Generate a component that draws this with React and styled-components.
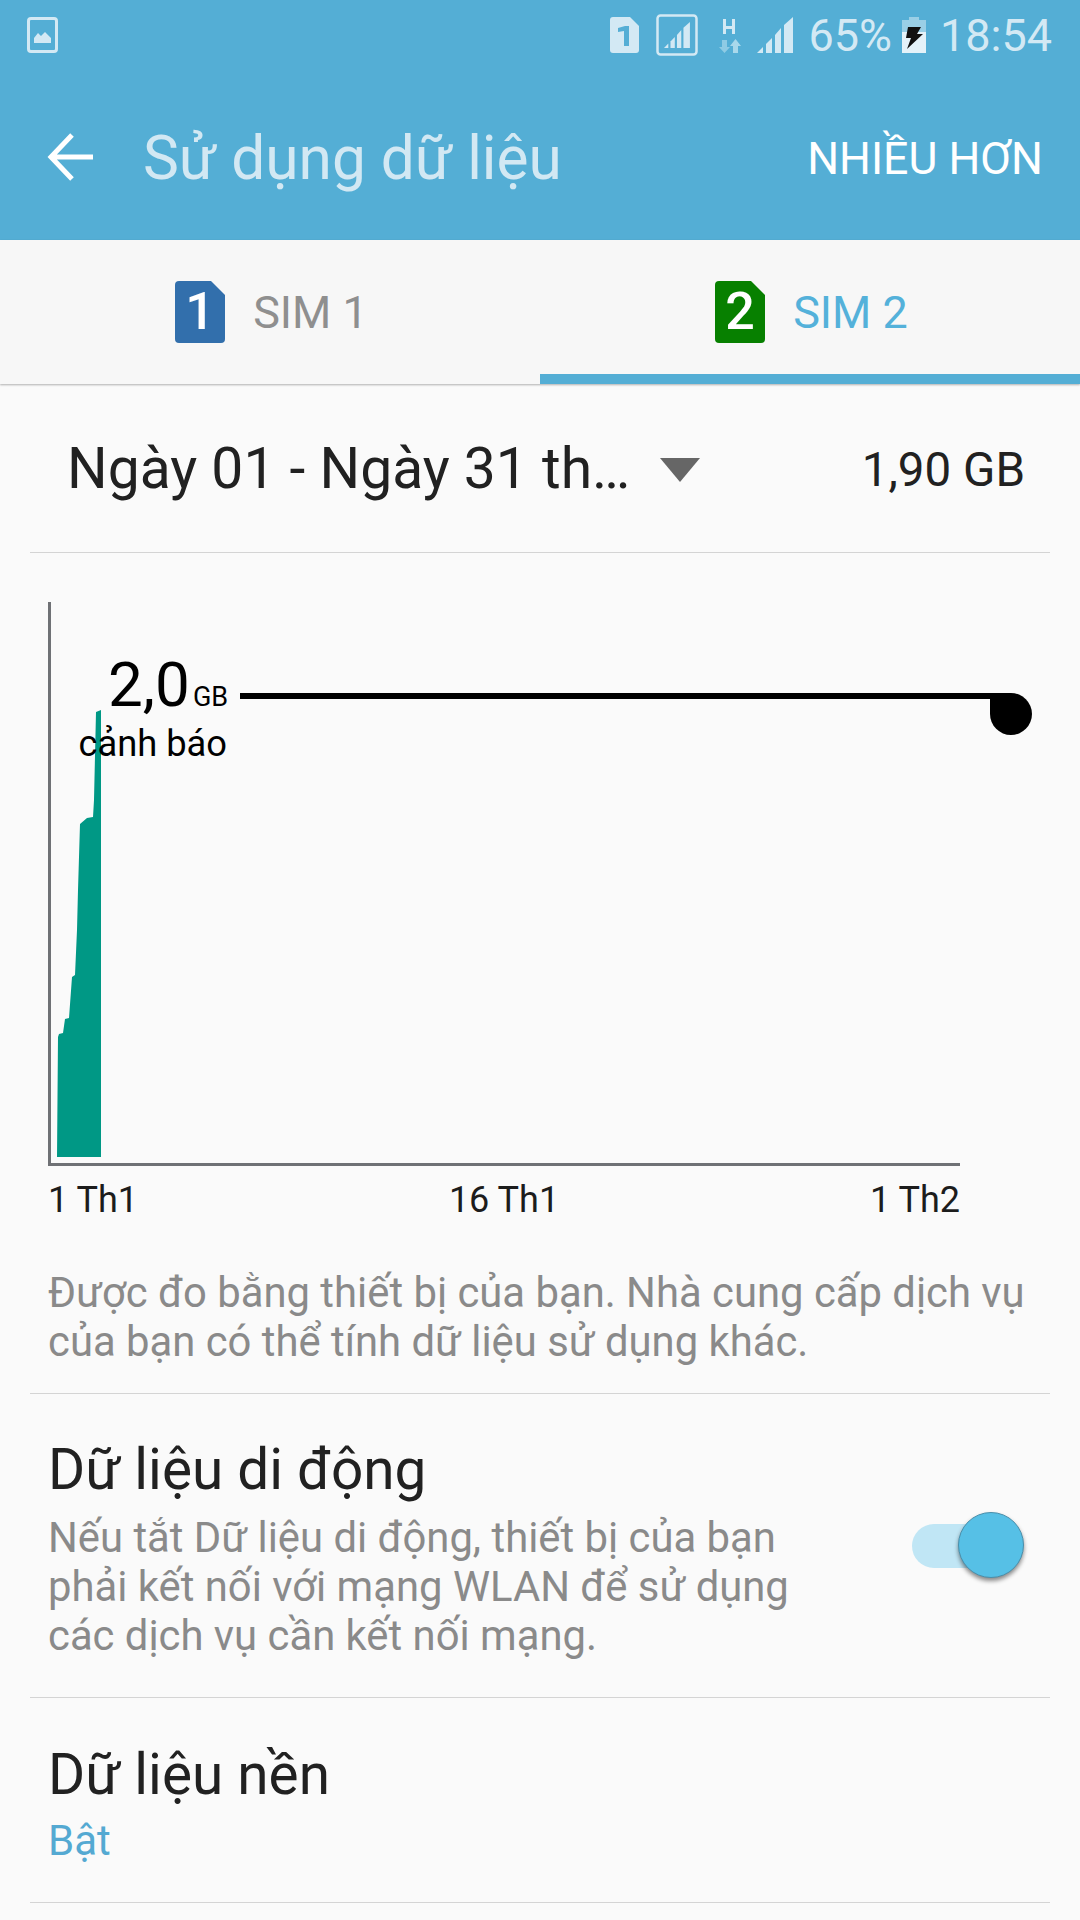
import styled, { createGlobalStyle } from 'styled-components';

const GlobalStyle = createGlobalStyle`
    html, body {
        margin: 0;
        padding: 0;
        background: #fafafa;
        font-family: Roboto, "Noto Sans", sans-serif;
    }
`;

const Page = styled.div`
    width: 1080px;
    height: 1920px;
    overflow: hidden;
    background: #fafafa;
`;

const Header = styled.header`
    background: #54aed5;
    height: 240px;
`;

const StatusBar = styled.div`
    height: 70px;
    display: flex;
    align-items: center;
    justify-content: space-between;
    padding: 0 28px 0 27px;
    color: #d3e9f4;
`;

const StatusRight = styled.div`
    display: flex;
    align-items: center;
`;

const StatusText = styled.span`
    font-size: 45px;
    line-height: 70px;
    padding-top: 2px;
    margin-left: ${p => p.$left}px;
`;

const StatusIcon = styled.svg`
    display: block;
    margin-left: ${p => p.$left || 0}px;
`;

const Toolbar = styled.div`
    height: 170px;
    box-sizing: border-box;
    display: flex;
    align-items: center;
    padding: 3px 37px 0 47px;
`;

const BackButton = styled.svg`
    display: block;
    width: 46px;
    height: 48px;
    flex: none;
`;

const Title = styled.h1`
    margin: 0 0 0 50px;
    padding-top: 3px;
    flex: 1;
    font-size: 60.4px;
    font-weight: 400;
    color: #d2e8f3;
    white-space: nowrap;
`;

const MoreButton = styled.span`
    padding-top: 5px;
    font-size: 44.7px;
    color: #fff;
    white-space: nowrap;
`;

const Tabs = styled.div`
    display: flex;
    height: 144px;
    background: #f7f7f7;
    box-shadow: 0 1px 2px rgba(0, 0, 0, 0.3);
`;

const Tab = styled.div`
    flex: 1;
    display: flex;
    align-items: center;
    justify-content: center;
    gap: 28px;
    padding-top: ${p => (p.$active ? 10 : 0)}px;
    padding-left: 3px;
    border-bottom: ${p => (p.$active ? '10px solid #54aed5' : '0')};
    box-sizing: border-box;
    font-size: 45px;
    color: ${p => (p.$active ? '#54b1da' : '#8f8f8f')};
`;

const SimBadge = styled.div`
    position: relative;
    width: 50px;
    height: 62px;
    display: flex;
    justify-content: center;
    font-size: 52px;
    font-weight: 500;
    line-height: 62px;
    color: #fff;
    flex: none;

    & svg {
        position: absolute;
        left: 0;
        top: 0;
    }

    & span {
        position: relative;
    }
`;

const DateRow = styled.div`
    height: 169px;
    margin: 0 30px;
    padding: 0 25px 0 37px;
    display: flex;
    align-items: center;
    border-bottom: 1px solid #d4d4d4;
    box-sizing: border-box;
`;

const DateText = styled.span`
    font-size: 57px;
    color: #212121;
    white-space: nowrap;
`;

const DateArrow = styled.span`
    width: 0;
    height: 0;
    margin: 4px 0 0 30px;
    border-left: 20px solid transparent;
    border-right: 20px solid transparent;
    border-top: 24px solid #666;
`;

const DateTotal = styled.span`
    margin-left: auto;
    padding-top: 3px;
    font-size: 47.5px;
    color: #212121;
`;

const ChartWrap = styled.div`
    padding: 49px 0 0 48px;
`;

const Chart = styled.div`
    position: relative;
    width: 912px;
    height: 564px;
    border-left: 3px solid #6f7175;
    border-bottom: 3px solid #6f7175;
    box-sizing: border-box;
`;

const ChartFill = styled.svg`
    position: absolute;
    left: 0;
    top: 0;
`;

const LimitValue = styled.div`
    position: absolute;
    left: 57px;
    top: 47px;
    font-size: 62px;
    line-height: 72px;
    color: #000;
    white-space: nowrap;
`;

const LimitUnit = styled.span`
    font-size: 27px;
    margin-left: 3px;
`;

const LimitLabel = styled.div`
    position: absolute;
    right: 733px;
    top: 120px;
    font-size: 36.3px;
    line-height: 44px;
    color: #000;
    white-space: nowrap;
`;

const LimitLine = styled.div`
    position: absolute;
    left: 189px;
    top: 91px;
    width: 770px;
    height: 6px;
    background: #000;
`;

const LimitKnob = styled.div`
    position: absolute;
    left: 939px;
    top: 91px;
    width: 42px;
    height: 42px;
    border-radius: 50%;
    border-top-left-radius: 0;
    background: #000;
`;

const AxisLabels = styled.div`
    width: 912px;
    display: flex;
    justify-content: space-between;
    padding-top: 12px;
    font-size: 36px;
    line-height: 44px;
    color: #1c1c1c;
`;

const Note = styled.p`
    margin: 46px 30px 0;
    padding: 0 18px 27px;
    border-bottom: 1px solid #d4d4d4;
    font-size: 41.8px;
    line-height: 49px;
    color: #8a8a8a;
    white-space: nowrap;
`;

const Row = styled.div`
    margin: 0 30px;
    padding: ${p => p.$pad};
    display: flex;
    align-items: center;
    border-bottom: 1px solid #d4d4d4;
`;

const RowBody = styled.div`
    flex: 1;
`;

const RowTitle = styled.div`
    font-size: 56.7px;
    line-height: 87px;
    color: #212121;
`;

const RowDescription = styled.div`
    font-size: 41.8px;
    line-height: 49px;
    color: #8a8a8a;
    white-space: nowrap;
`;

const RowValue = styled.div`
    font-size: 42px;
    line-height: 46px;
    color: #54a9d2;
`;

const Switch = styled.div`
    position: relative;
    width: 88px;
    height: 44px;
    margin: 6px 50px 0 0;
    border-radius: 22px;
    background: #c0e6f5;
    flex: none;
`;

const SwitchKnob = styled.div`
    position: absolute;
    right: -24px;
    top: -12px;
    width: 66px;
    height: 66px;
    box-sizing: border-box;
    border-radius: 50%;
    background: #56c0e6;
    border: 1px solid #4a8fab;
    box-shadow: 0 3px 4px rgba(0, 0, 0, 0.45);
`;

const SimIcon = ({ color, digit }) => (
    <SimBadge>
        <svg width="50" height="62" viewBox="0 0 50 62">
            <path d="M4 0H36L50 14V58a4 4 0 0 1-4 4H4a4 4 0 0 1-4-4V4a4 4 0 0 1 4-4Z" fill={color} />
        </svg>
        <span>{digit}</span>
    </SimBadge>
);

const SignalBars = ({ x = 0, y = 0, scale = 1, fill }) => (
    <g transform={`translate(${x} ${y}) scale(${scale})`} fill={fill}>
        <path d="M0 36L6 30V36Z" />
        <path d="M9 36V27L15 21V36Z" />
        <path d="M18 36V18L24 11V36Z" />
        <path d="M27 36V8L36 0V36Z" />
    </g>
);

export default function App() {
    return (
        <Page>
            <GlobalStyle />
            <Header>
                <StatusBar>
                    <StatusIcon width="31" height="36" viewBox="0 0 31 36">
                        <rect x="1.5" y="1.5" width="28" height="33" rx="2.5" fill="none" stroke="#d3e9f4" strokeWidth="3" />
                        <path d="M7 26V21L11 16L14 19L18 15L24 21V26Z" fill="#d3e9f4" />
                    </StatusIcon>
                    <StatusRight>
                        <StatusIcon width="29" height="36" viewBox="0 0 29 36">
                            <path d="M3 0H20L29 9V33a3 3 0 0 1-3 3H3a3 3 0 0 1-3-3V3a3 3 0 0 1 3-3Z" fill="#d3e9f4" />
                            <path d="M8 11L15 9H19V29H14V14L8 15Z" fill="#54aed5" />
                        </StatusIcon>
                        <StatusIcon $left={17} width="42" height="42" viewBox="0 0 42 42">
                            <rect x="1.5" y="1.5" width="39" height="39" rx="3" fill="none" stroke="#d3e9f4" strokeWidth="2.5" />
                            <SignalBars x={8} y={8} scale={0.72} fill="#d3e9f4" />
                        </StatusIcon>
                        <StatusIcon $left={21} width="22" height="36" viewBox="0 0 22 36">
                            <path d="M4 2H7V9H13V2H16V17H13V12H7V17H4Z" fill="#d3e9f4" />
                            <path d="M3 23H8V30H11L5.5 36L0 30H3Z" fill="#8fcbe4" />
                            <path d="M14 36V29H11L16.5 22L22 29H19V36Z" fill="#a9d8eb" />
                        </StatusIcon>
                        <StatusIcon $left={16} width="36" height="36" viewBox="0 0 36 36">
                            <SignalBars fill="#d3e9f4" />
                        </StatusIcon>
                        <StatusText $left={15}>65%</StatusText>
                        <StatusIcon $left={10} width="24" height="36" viewBox="0 0 24 36">
                            <path d="M7 0H17V3H24V36H0V3H7Z" fill="#e4f2f9" />
                            <path d="M7 0H17V3H24V15H0V3H7Z" fill="#9acfe6" />
                            <path d="M6 10H19L15 17H21L5 32L9 21H4Z" fill="#111" />
                        </StatusIcon>
                        <StatusText $left={14}>18:54</StatusText>
                    </StatusRight>
                </StatusBar>
                <Toolbar>
                    <BackButton viewBox="0 0 46 48">
                        <path d="M46 24H4M25 2L4 24L25 46" fill="none" stroke="#fff" strokeWidth="5" />
                    </BackButton>
                    <Title>Sử dụng dữ liệu</Title>
                    <MoreButton>NHIỀU HƠN</MoreButton>
                </Toolbar>
            </Header>

            <Tabs>
                <Tab>
                    <SimIcon color="#326fac" digit="1" />
                    SIM 1
                </Tab>
                <Tab $active>
                    <SimIcon color="#078000" digit="2" />
                    SIM 2
                </Tab>
            </Tabs>

            <DateRow>
                <DateText>Ngày 01 - Ngày 31 th…</DateText>
                <DateArrow />
                <DateTotal>1,90 GB</DateTotal>
            </DateRow>

            <ChartWrap>
                <Chart>
                    <ChartFill width="120" height="564" viewBox="51 602 120 564">
                        <path
                            d="M57 1157L58 1037L59 1034L63 1033L65 1019L69 1018L72 977L75 975L77 930L78 890L80 824L87 818L93 817L94 800L96 712L101 710V1157Z"
                            fill="#009885"
                        />
                    </ChartFill>
                    <LimitValue>2,0<LimitUnit>GB</LimitUnit></LimitValue>
                    <LimitLabel>cảnh báo</LimitLabel>
                    <LimitLine />
                    <LimitKnob />
                </Chart>
                <AxisLabels>
                    <span>1 Th1</span>
                    <span>16 Th1</span>
                    <span>1 Th2</span>
                </AxisLabels>
            </ChartWrap>

            <Note>
                Được đo bằng thiết bị của bạn. Nhà cung cấp dịch vụ
                <br />
                của bạn có thể tính dữ liệu sử dụng khác.
            </Note>

            <Row $pad="32px 0 37px 18px">
                <RowBody>
                    <RowTitle>Dữ liệu di động</RowTitle>
                    <RowDescription>
                        Nếu tắt Dữ liệu di động, thiết bị của bạn
                        <br />
                        phải kết nối với mạng WLAN để sử dụng
                        <br />
                        các dịch vụ cần kết nối mạng.
                    </RowDescription>
                </RowBody>
                <Switch>
                    <SwitchKnob />
                </Switch>
            </Row>

            <Row $pad="33px 0 38px 18px">
                <RowBody>
                    <RowTitle>Dữ liệu nền</RowTitle>
                    <RowValue>Bật</RowValue>
                </RowBody>
            </Row>
        </Page>
    );
}
